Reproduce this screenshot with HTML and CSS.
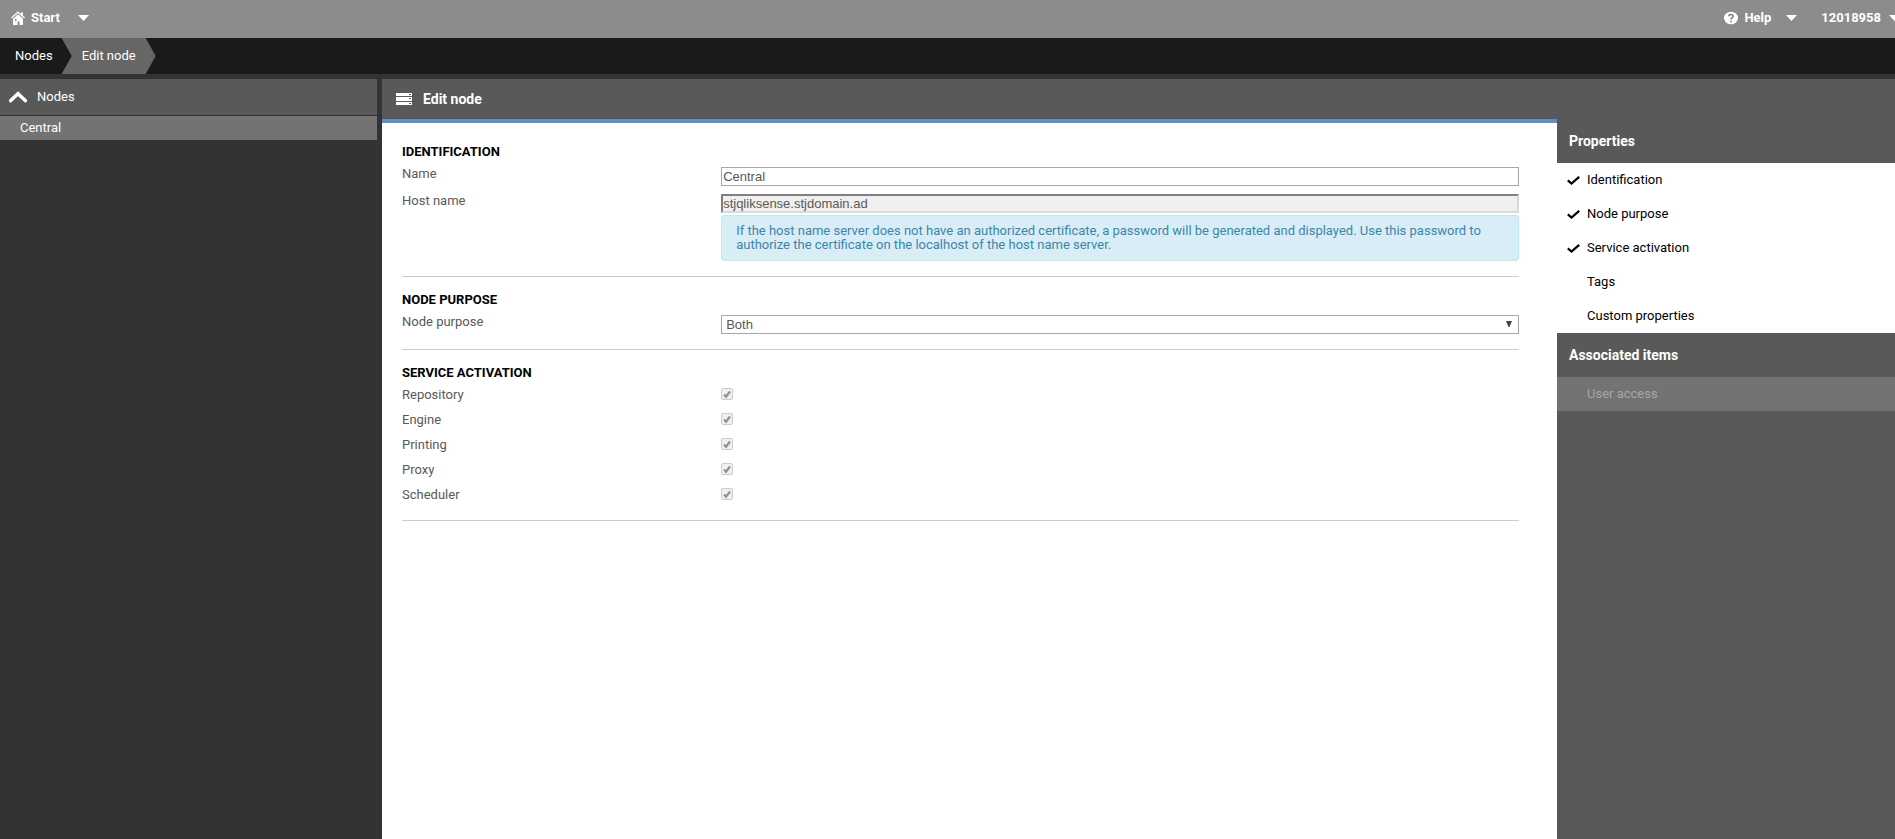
FILE: index.html
```html
<!DOCTYPE html>
<html lang="en">
<head>
<meta charset="utf-8">
<title>Edit node</title>
<link rel="stylesheet" href="styles.css">
</head>
<body>
<header class="topbar">
  <button class="top-button start" type="button">
    <svg class="icon-home" width="14" height="14" viewBox="0 0 14 14"><path d="M0 6.600 7 .300l3 2.700V1.400h2V4.800l2 1.800-.8.900L7 1.900.8 7.500z" fill="#fff"/><path d="M2 7.700 7 3.200l5 4.500V14H8.500v-3.500h-2V14H2zM4 8v2h1.500V8z" fill="#fff" fill-rule="evenodd"/></svg>
    <span>Start</span>
    <svg class="caret" width="11" height="6" viewBox="0 0 11 6"><path d="M0 0h11L5.500 6z" fill="#fff"/></svg>
  </button>
  <div class="top-right">
    <button class="top-button help" type="button">
      <svg width="14" height="14" viewBox="0 0 14 14"><ellipse cx="7" cy="7" rx="7" ry="6.300" fill="#fff"/><path d="M4.800 5.300c.2-2.400 4.500-2.300 4.400 0-.1 1.400-2.200 1.500-2.200 3.100M7 9.700v1.500" fill="none" stroke="#777" stroke-width="1.500"/></svg>
      <span>Help</span>
      <svg class="caret" width="11" height="6" viewBox="0 0 11 6"><path d="M0 0h11L5.500 6z" fill="#fff"/></svg>
    </button>
    <button class="top-button user" type="button">
      <span>12018958</span>
      <svg class="caret" width="11" height="6" viewBox="0 0 11 6"><path d="M0 0h11L5.500 6z" fill="#fff"/></svg>
    </button>
  </div>
</header>
<nav class="crumbs" aria-label="Breadcrumb">
  <a class="crumb" href="#nodes">Nodes</a>
  <a class="crumb current" href="#edit">Edit node</a>
</nav>
<div class="workspace">
  <aside class="selection">
    <button class="selection-head" type="button">
      <svg width="18" height="12" viewBox="0 0 18 12"><path d="M1.500 9.700 9 2.700l7.500 7" fill="none" stroke="#fff" stroke-width="3.400" stroke-linecap="round"/></svg>
      <span>Nodes</span>
    </button>
    <a class="selection-item" href="#central">Central</a>
  </aside>
  <div class="editor">
    <main class="main">
      <h1 class="main-title">
        <svg width="16" height="12" viewBox="0 0 16 12"><path d="M0 0h16v3H0zM0 4h16v4H0zM0 9h16v3H0z" fill="#fff"/><path d="M13 1h2v1h-2zM13 5h2v1h-2zM13 10h2v1h-2z" fill="#595959"/></svg>
        Edit node
      </h1>
      <form class="form">
        <section class="group" id="identification">
          <h2>Identification</h2>
          <div class="row">
            <label for="name">Name</label>
            <div><input class="text" id="name" type="text" value="Central"></div>
          </div>
          <div class="row">
            <label for="host">Host name</label>
            <div>
              <input class="text" id="host" type="text" value="stjqliksense.stjdomain.ad" disabled>
              <p class="notice">If the host name server does not have an authorized certificate, a password will be generated and displayed. Use this password to authorize the certificate on the localhost of the host name server.</p>
            </div>
          </div>
        </section>
        <section class="group" id="purpose">
          <h2>Node purpose</h2>
          <div class="row">
            <label for="node-purpose">Node purpose</label>
            <div class="select-box">
              <select id="node-purpose"><option>Both</option></select>
              <svg class="select-arrow" width="6" height="6" viewBox="0 0 6 6"><path d="M0 0h6L3.500 6h-1z" fill="#444"/></svg>
            </div>
          </div>
        </section>
        <section class="group" id="services">
          <h2>Service activation</h2>
          <div class="row"><label for="repository">Repository</label><span class="check-box"><input id="repository" type="checkbox" checked disabled><svg class="tick" viewBox="0 0 12 12"><path d="M3 6.500 5 8.700 9 3.500" fill="none" stroke="#919191" stroke-width="2.200"/></svg></span></div>
          <div class="row"><label for="engine">Engine</label><span class="check-box"><input id="engine" type="checkbox" checked disabled><svg class="tick" viewBox="0 0 12 12"><path d="M3 6.500 5 8.700 9 3.500" fill="none" stroke="#919191" stroke-width="2.200"/></svg></span></div>
          <div class="row"><label for="printing">Printing</label><span class="check-box"><input id="printing" type="checkbox" checked disabled><svg class="tick" viewBox="0 0 12 12"><path d="M3 6.500 5 8.700 9 3.500" fill="none" stroke="#919191" stroke-width="2.200"/></svg></span></div>
          <div class="row"><label for="proxy">Proxy</label><span class="check-box"><input id="proxy" type="checkbox" checked disabled><svg class="tick" viewBox="0 0 12 12"><path d="M3 6.500 5 8.700 9 3.500" fill="none" stroke="#919191" stroke-width="2.200"/></svg></span></div>
          <div class="row"><label for="scheduler">Scheduler</label><span class="check-box"><input id="scheduler" type="checkbox" checked disabled><svg class="tick" viewBox="0 0 12 12"><path d="M3 6.500 5 8.700 9 3.500" fill="none" stroke="#919191" stroke-width="2.200"/></svg></span></div>
        </section>
      </form>
    </main>
    <aside class="side">
      <h2 class="side-title first">Properties</h2>
      <ul class="props">
        <li><button type="button"><svg width="13" height="9" viewBox="0 0 13 9"><path d="M.8 4.300 4.500 7.500 12.200.800" fill="none" stroke="#000" stroke-width="2.200"/></svg>Identification</button></li>
        <li><button type="button"><svg width="13" height="9" viewBox="0 0 13 9"><path d="M.8 4.300 4.500 7.500 12.200.800" fill="none" stroke="#000" stroke-width="2.200"/></svg>Node purpose</button></li>
        <li><button type="button"><svg width="13" height="9" viewBox="0 0 13 9"><path d="M.8 4.300 4.500 7.500 12.200.800" fill="none" stroke="#000" stroke-width="2.200"/></svg>Service activation</button></li>
        <li><button class="off" type="button">Tags</button></li>
        <li><button class="off" type="button">Custom properties</button></li>
      </ul>
      <h2 class="side-title">Associated items</h2>
      <ul class="props assoc">
        <li><button class="off" type="button" disabled>User access</button></li>
      </ul>
    </aside>
  </div>
</div>
</body>
</html>
```
FILE: styles.css
```css
* { box-sizing: border-box; }
body {
  margin: 0;
  min-height: 100vh;
  display: flex;
  flex-direction: column;
  background: #333;
  color: #595959;
  font: 13px/14px Roboto, "Liberation Sans", sans-serif;
  overflow-x: hidden;
}
button { border: 0; background: none; font: inherit; color: inherit; margin: 0; padding: 0; text-align: left; }
a { color: inherit; text-decoration: none; }
h1, h2, p, ul { margin: 0; padding: 0; }
ul { list-style: none; }
svg { flex: none; }

.topbar {
  height: 38px;
  padding: 0 0 2px 11px;
  background: #8c8c8c;
  display: flex;
  justify-content: space-between;
  align-items: center;
  overflow: hidden;
}
.top-right { display: flex; gap: 24px; margin-right: -5px; }
.top-button { display: flex; align-items: center; gap: 6px; height: 36px; color: #fff; font-weight: 700; }
.top-button .caret { margin-left: 9px; }
.top-button.start .caret { margin-left: 12px; }
.top-button.user .caret { margin-left: 2px; }

.crumbs { height: 36px; background: #1a1a1a; color: #fff; display: flex; }
.crumb { display: flex; align-items: center; height: 36px; padding: 0 9px 0 15px; }
.crumb.current {
  padding: 0 20px;
  background: #666;
  clip-path: polygon(0 0, calc(100% - 10px) 0, 100% 50%, calc(100% - 10px) 100%, 0 100%, 10px 50%);
}

.workspace { flex: 1; display: flex; gap: 5px; padding-top: 5px; }
.selection { flex: 0 0 377px; color: #fff; display: flex; flex-direction: column; gap: 1px; }
.selection-head { display: flex; align-items: center; gap: 10px; height: 36px; padding-left: 9px; background: #595959; }
.selection-item { display: flex; align-items: center; height: 24px; padding-left: 20px; background: #737373; }

.editor { flex: 1; display: flex; background: #595959; min-width: 0; }
.main { flex: 1; display: flex; flex-direction: column; min-width: 0; }
.main-title {
  display: flex;
  align-items: center;
  gap: 11px;
  height: 44px;
  padding-left: 14px;
  border-bottom: 4px solid #5f8fc3;
  color: #fff;
  font-size: 14px;
}
.form { flex: 1; padding: 6px 38px 0 20px; background: #fff; }
.group { padding: 13px 0 7px; border-bottom: 1px solid #ccc; }
.group h2 { margin-bottom: 5px; color: #000; font-size: 13px; line-height: 20px; text-transform: uppercase; }
.row { display: grid; grid-template-columns: 2fr 5fr; min-height: 17px; margin-bottom: 8px; }
.text, select {
  display: block;
  width: 100%;
  height: 19px;
  margin: 0;
  padding: 0 1px;
  border: 1px solid #a6a6a6;
  border-radius: 0;
  background: #fff;
  color: #595959;
  font: 13px "Liberation Sans", Arial, sans-serif;
}
.text:disabled { padding: 0; border: 2px solid; border-color: #808080 #d9d9d9 #d9d9d9 #808080; background: #f0f0f0; }
.notice {
  margin-top: 2px;
  padding: 8px 14px;
  border: 1px solid #bce8f1;
  border-radius: 3px;
  background: #d9edf7;
  color: #3a87ad;
}
.select-box { position: relative; }
select { appearance: none; padding: 0 4px; }
.select-arrow { position: absolute; right: 7px; top: 6px; pointer-events: none; }
.check-box { position: relative; width: 12px; height: 12px; }
.check-box input {
  appearance: none;
  display: block;
  width: 12px;
  height: 12px;
  margin: 0;
  border: 1px solid #ccc;
  border-radius: 2px;
  background: #f0f0f0;
}
.tick { position: absolute; inset: 0; pointer-events: none; }

.side { flex: 0 0 338px; color: #000; }
.side-title { display: flex; align-items: center; height: 44px; padding: 0 12px; color: #fff; font-size: 14px; }
.side-title.first { margin-top: 40px; }
.props { background: #fff; }
.props button { display: flex; align-items: center; gap: 7px; width: 100%; height: 34px; padding-left: 10px; }
.props button.off { padding-left: 30px; }
.assoc { background: #737373; color: #a6a6a6; }
```
